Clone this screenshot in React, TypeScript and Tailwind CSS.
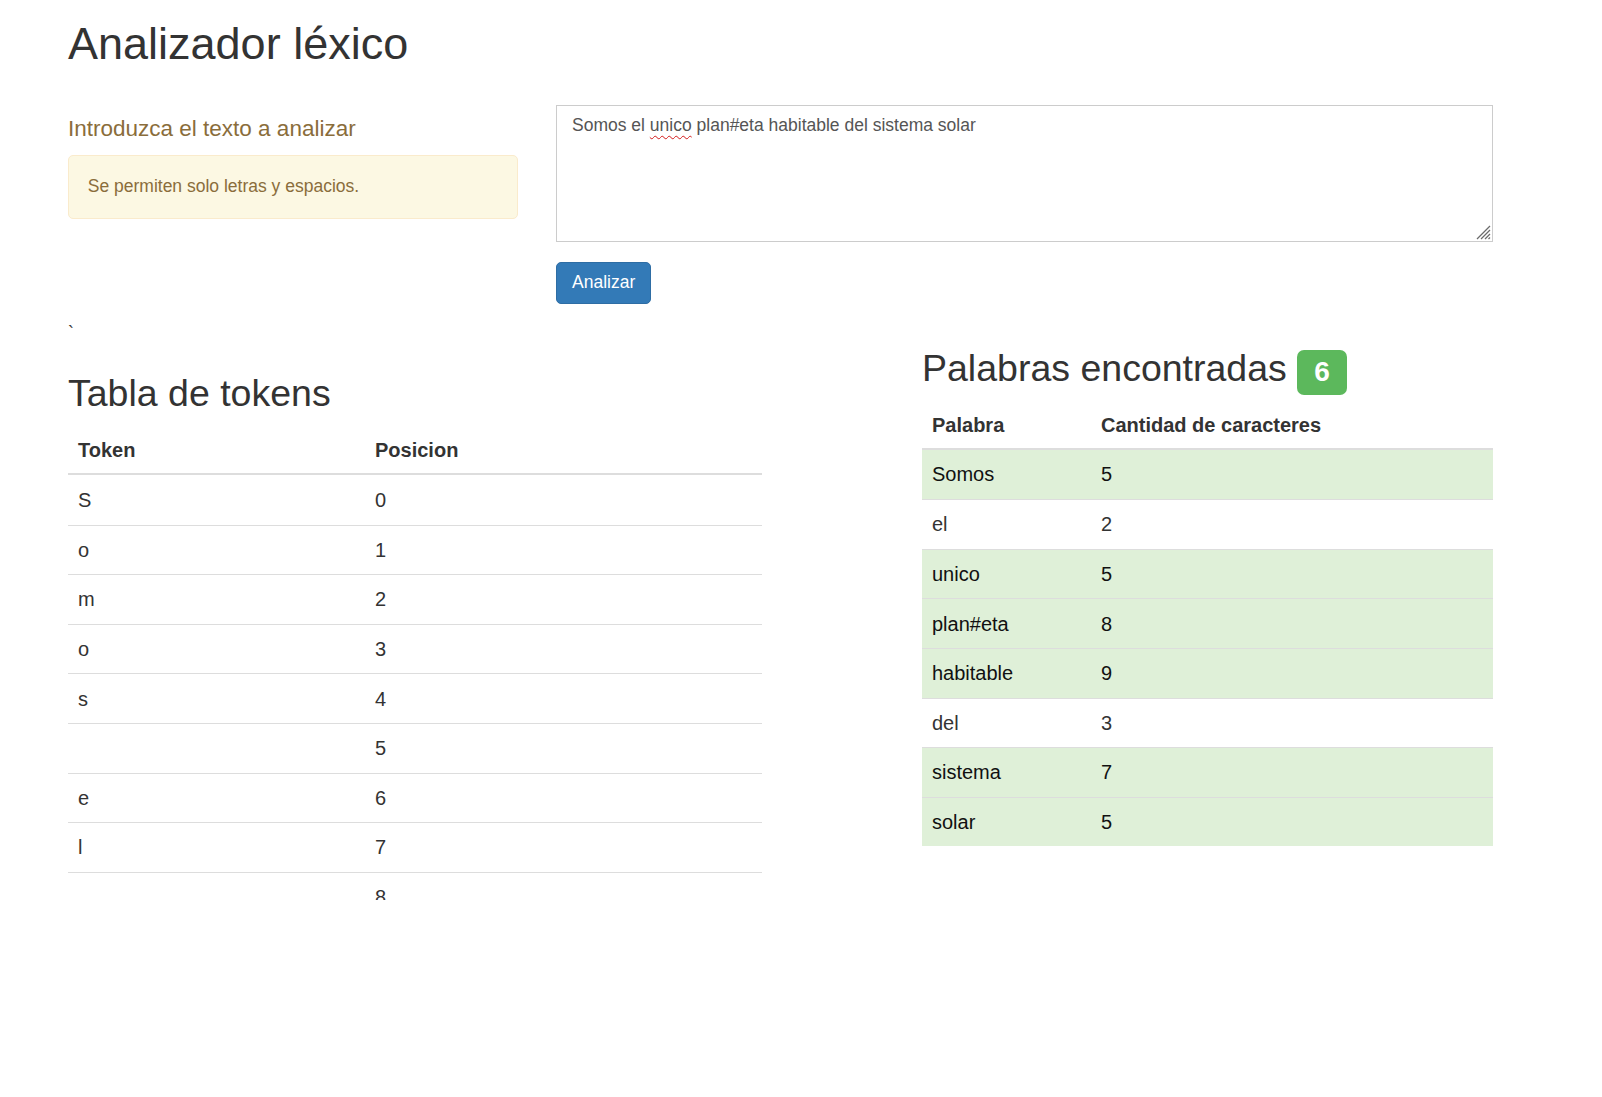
import React from 'react';

const TEXT = 'Somos el unico plan#eta habitable del sistema solar';

// solo las primeras filas caben en el recuadro
const tokens = TEXT.split('').slice(0, 9).map((ch, i) => ({ token: ch, pos: i }));
const words = TEXT.split(' ').map((w) => ({ word: w, len: w.length, ok: w.length > 3 }));

const TextBox: React.FC = () => (
    <div className="relative h-[137px] border border-[#cccccc] bg-white px-[15px] py-[7.5px] text-[17.5px] leading-[25px] text-[#555555]">
        Somos el{' '}
        <span className="underline decoration-wavy decoration-[#d21a1a] decoration-1 underline-offset-[4px]">unico</span>{' '}
        plan#eta habitable del sistema solar
        <svg className="absolute right-[1px] bottom-[1px]" width="16" height="16" viewBox="0 0 16 16">
            <g stroke="#6b6b6b" strokeWidth="1.2">
                <line x1="15" y1="2" x2="2" y2="15" />
                <line x1="15" y1="6" x2="6" y2="15" />
                <line x1="15" y1="10" x2="10" y2="15" />
                <line x1="15" y1="13.5" x2="13.5" y2="15" />
            </g>
        </svg>
    </div>
);

const App: React.FC = () => {
    return (
        <div className="min-h-[1097px] bg-white pl-[68px] pt-[19px] font-['Liberation_Sans',Arial,sans-serif] text-[17.5px] leading-[25px] text-[#333333]">
            <h1 className="text-[45px] leading-[1.1] font-normal">Analizador léxico</h1>

            {/* formulario */}
            <div className="mt-[36px] grid grid-cols-[450px_937px] gap-x-[38px]">
                <div>
                    <h4 className="mt-[12px] text-[22.5px] leading-[1.1] text-[#8a6d3b]">Introduzca el texto a analizar</h4>
                    <div className="mt-[13.5px] rounded-[5px] border border-[#faebcc] bg-[#fcf8e3] px-[18.75px] py-[18.5px] text-[#8a6d3b]">
                        Se permiten solo letras y espacios.
                    </div>
                </div>
                <div>
                    <TextBox />
                    <button className="mt-[20px] rounded-[5px] border border-[#2e6da4] bg-[#337ab7] px-[15px] py-[7.5px] text-[17.5px] leading-[25px] text-white">
                        Analizar
                    </button>
                </div>
            </div>

            <div className="mt-[17.5px] h-[25px]">`</div>

            <div className="mt-[1.5px] grid grid-cols-[694px_571px] items-start gap-x-[160px] text-[20px] leading-[26px]">
                {/* tokens */}
                <div className="mt-[25.5px]">
                    <h2 className="text-[37.5px] leading-[1.1]">Tabla de tokens</h2>
                    <div className="mt-[12.75px] h-[473px] overflow-hidden">
                        <table className="w-full border-separate border-spacing-0 text-left">
                            <thead>
                                <tr>
                                    <th className="h-[48px] w-[297px] border-b-2 border-[#dddddd] px-[10px] py-0 font-bold">Token</th>
                                    <th className="h-[48px] border-b-2 border-[#dddddd] px-[10px] py-0 font-bold">Posicion</th>
                                </tr>
                            </thead>
                            <tbody>
                                {tokens.map((t, i) => (
                                    <tr key={t.pos}>
                                        <td className={i === 0 ? 'h-[49.6px] px-[10px] py-0' : 'h-[49.6px] border-t border-[#dddddd] px-[10px] py-0'}>
                                            {t.token}
                                        </td>
                                        <td className={i === 0 ? 'h-[49.6px] px-[10px] py-0' : 'h-[49.6px] border-t border-[#dddddd] px-[10px] py-0'}>
                                            {t.pos}
                                        </td>
                                    </tr>
                                ))}
                            </tbody>
                        </table>
                    </div>
                </div>

                {/* palabras */}
                <div>
                    <h2 className="text-[37.5px] leading-[1.1]">
                        Palabras encontradas{' '}
                        <span className="rounded-[7px] bg-[#5cb85c] px-[16.9px] pt-[5.6px] pb-[8.4px] align-baseline text-[28px] leading-none font-bold text-white">
                            {words.filter((w) => w.ok).length}
                        </span>
                    </h2>
                    <table className="mt-[12.85px] w-full border-separate border-spacing-0 text-left">
                        <thead>
                            <tr>
                                <th className="h-[48px] w-[169px] border-b-2 border-[#dddddd] px-[10px] py-0 font-bold">Palabra</th>
                                <th className="h-[48px] border-b-2 border-[#dddddd] px-[10px] py-0 font-bold">Cantidad de caracteres</th>
                            </tr>
                        </thead>
                        <tbody>
                            {words.map((w, i) => (
                                <tr key={i} className={w.ok ? 'bg-[#dff0d8] text-[#111111]' : 'bg-white'}>
                                    <td className={i === 0 ? 'h-[49.6px] px-[10px] py-0' : 'h-[49.6px] border-t border-[#dddddd] px-[10px] py-0'}>
                                        {w.word}
                                    </td>
                                    <td className={i === 0 ? 'h-[49.6px] px-[10px] py-0' : 'h-[49.6px] border-t border-[#dddddd] px-[10px] py-0'}>
                                        {w.len}
                                    </td>
                                </tr>
                            ))}
                        </tbody>
                    </table>
                </div>
            </div>
        </div>
    );
};

export default App;
